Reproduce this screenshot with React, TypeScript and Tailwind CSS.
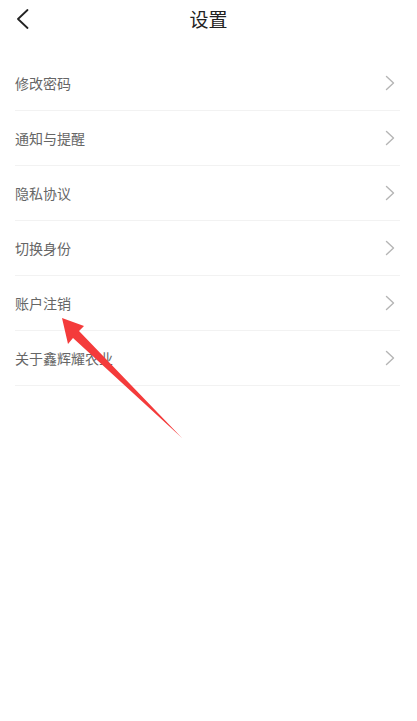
const items = ["修改密码", "通知与提醒", "隐私协议", "切换身份", "账户注销", "关于鑫辉耀农业"];

export default function App() {
  return (
    <div
      className="relative w-[417px] h-[721px] bg-white overflow-hidden"
      style={{ fontFamily: '"Noto Sans CJK SC", "Noto Sans", sans-serif' }}
    >
      <header className="relative h-[56px] flex items-start justify-center pt-[5px]">
        <button className="absolute left-[16px] top-[9px]">
          <svg width="14" height="20" viewBox="0 0 14 20" fill="none">
            <path d="M11.5 1 L2 10 L11.5 19" stroke="#222" strokeWidth="1.8" strokeLinecap="round" strokeLinejoin="round" />
          </svg>
        </button>
        <h1 className="text-[19px] leading-[28px] text-[#222]">设置</h1>
      </header>
      <ul className="pl-[15px] pr-[17px]">
        {items.map((t) => (
          <li key={t} className="h-[55px] flex items-center justify-between border-b border-[#f2f2f2]">
            <span className="text-[14px] text-[#666]">{t}</span>
            <svg width="10" height="16" viewBox="0 0 10 16" fill="none" className="mr-[5px]">
              <path d="M1.5 1.5 L8.5 8 L1.5 14.5" stroke="#b5b5b5" strokeWidth="1.4" strokeLinecap="round" strokeLinejoin="round" />
            </svg>
          </li>
        ))}
      </ul>
      <svg className="absolute left-0 top-0 pointer-events-none" width="417" height="721">
        <polygon points="62,318 84,326 79,331 182,438 73,338 68,344" fill="#f43b3b" />
      </svg>
    </div>
  );
}
